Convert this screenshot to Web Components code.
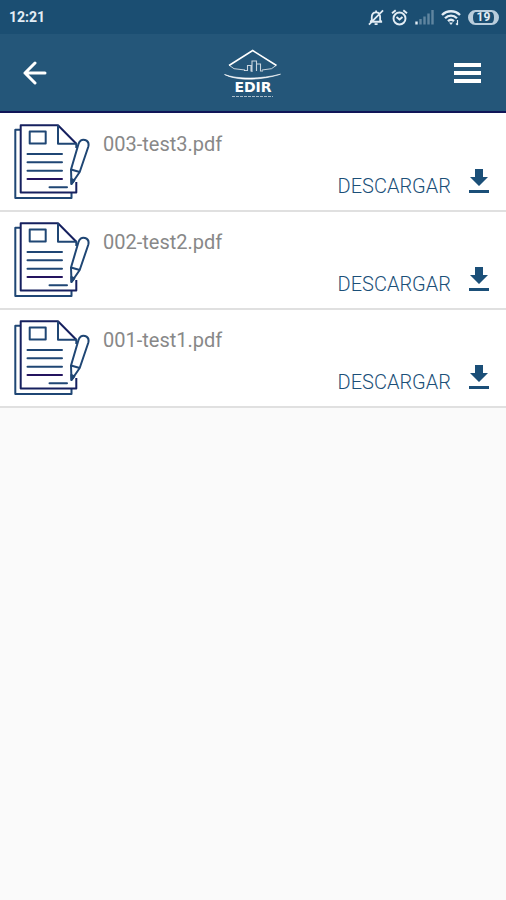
<!DOCTYPE html>
<html lang="es">
<head>
<meta charset="UTF-8">
<meta name="viewport" content="width=device-width, initial-scale=1">
<title>Documentos</title>
<style>
  body {
    margin: 0;
    background: #fafafa;
    font-family: Roboto, "Liberation Sans", sans-serif;
    --azul: #1b4f78;
    --barra: #245679;
    --estado: #1b4e72;
    --marino: #101658;
  }
</style>
</head>
<body>
<barra-estado hora="12:21" bateria="19"></barra-estado>
<barra-app></barra-app>
<lista-documentos></lista-documentos>

<script>
// Documentos disponibles para descargar
const documentos = ['003-test3.pdf', '002-test2.pdf', '001-test1.pdf'];

// Barra de estado del teléfono
class BarraEstado extends HTMLElement {
  constructor() {
    super();
    this.attachShadow({ mode: 'open' });
  }

  connectedCallback() {
    this.shadowRoot.innerHTML = `
      <style>
        :host { display: flex; align-items: center; justify-content: space-between; height: 34px; padding: 0 7px 0 9px; background: var(--estado); color: #e3edf5; }
        time { font-size: 14px; font-weight: 700; }
        .iconos { display: flex; align-items: center; gap: 7px; }
        svg { display: block; fill: none; stroke: currentColor; }
        .bateria { box-sizing: border-box; display: flex; align-items: center; justify-content: center; width: 31px; height: 15px; border: 2px solid #b9cddc; border-left-width: 5px; border-right-width: 5px; border-radius: 8px; font-size: 12px; line-height: 12px; font-weight: 700; }
      </style>
      <time>${this.getAttribute('hora')}</time>
      <div class="iconos">
        <svg width="16" height="17" viewBox="0 0 17 17" stroke-width="1.900" aria-hidden="true">
          <path d="M2 13h13M4 11.500V8c0-3 1.800-5 4.600-5s4.300 2 4.300 5v3.500l1.500 1.500M4 11.500L2.500 13M8.600 3V1M1 16L16 1"/>
          <path d="M7 15.500h3.200"/>
        </svg>
        <svg width="17" height="17" viewBox="0 0 17 17" stroke-width="1.900" aria-hidden="true">
          <circle cx="8.500" cy="9.500" r="6"/>
          <path d="M1 4.300L4.700 1.200M16 4.300L12.300 1.200M5.500 8L8.500 10.500L11.500 8"/>
        </svg>
        <svg width="19" height="16" viewBox="0 0 19 16" stroke-width="2.400" aria-hidden="true">
          <path d="M1.500 15.500v-3"/>
          <path opacity=".35" d="M5.500 15.500V10M9.500 15.500V7.500M13.500 15.500V4.500M17.500 15.500V1"/>
        </svg>
        <svg width="20" height="17" viewBox="0 0 20 17" stroke-width="2.300" aria-hidden="true">
          <path d="M1 6c5-5 13-5 18 0M4 9.200c3.500-3.500 8.500-3.500 12 0M7 12.200c1.800-1.700 4.200-1.700 6 0"/>
          <path fill="currentColor" stroke="none" d="M8 13.500h4l-2 2.500z"/>
          <path stroke-width="1.200" d="M16.500 11v5M15 14.500l1.500 1.500"/>
        </svg>
        <div class="bateria">${this.getAttribute('bateria')}</div>
      </div>
    `;
  }
}
customElements.define('barra-estado', BarraEstado);

// Logotipo: tejado, edificios y nombre
class LogoEdir extends HTMLElement {
  constructor() {
    super();
    this.attachShadow({ mode: 'open' });
    this.shadowRoot.innerHTML = `
      <style>
        :host { display: block; color: #fff; }
        svg { display: block; }
      </style>
      <svg width="60" height="50" viewBox="0 0 60 50" role="img" aria-label="EDIR" fill="none" stroke="currentColor">
        <path stroke-width="1.500" d="M6 17.500L29.700 2.500L53.500 17.500"/>
        <path stroke-width="1" opacity=".75" d="M6.500 17.500L11 20.700L22 22M53 17.500L48.500 20.700L39 22"/>
        <path stroke-width="1.100" opacity=".75" d="M21 22.500h3.500v-5h3.500v6M29 24V13h4.500v10M33.500 16h4v7h2.500"/>
        <path fill="currentColor" stroke-width=".6" d="M1.500 26.500c13 5 37 4.500 56-.3c-18 6-43 7.300-56 .3z"/>
        <text x="30" y="44" text-anchor="middle" fill="currentColor" stroke="none" font-family="DejaVu Sans, sans-serif" font-size="14" font-weight="700">EDIR</text>
        <path stroke-width="1" opacity=".6" stroke-dasharray="3 1" d="M9 48.500h41"/>
      </svg>
    `;
  }
}
customElements.define('logo-edir', LogoEdir);

// Cabecera con botón de volver, logotipo y menú
class BarraApp extends HTMLElement {
  constructor() {
    super();
    this.attachShadow({ mode: 'open' });
    this.shadowRoot.innerHTML = `
      <style>
        :host { box-sizing: border-box; display: flex; align-items: center; justify-content: space-between; height: 79px; padding: 0 15px 0 8px; background: var(--barra); border-bottom: 2px solid var(--marino); color: #fff; }
        button { display: flex; align-items: center; justify-content: center; width: 48px; height: 48px; padding: 0; border: 0; background: none; color: inherit; cursor: pointer; }
        .volver { width: 54px; }
      </style>
      <button class="volver" type="button" aria-label="Volver">
        <svg width="24" height="24" viewBox="0 0 24 24" fill="none" stroke="currentColor" stroke-width="3" stroke-linecap="round" stroke-linejoin="round"><path d="M12 2L2 12L12 22M2 12H22"/></svg>
      </button>
      <logo-edir></logo-edir>
      <button type="button" aria-label="Menú">
        <svg width="28" height="20" viewBox="0 0 28 20" fill="currentColor"><path d="M1 0h27v4H1zM1 8h27v4H1zM1 16h27v4H1z"/></svg>
      </button>
    `;
  }
}
customElements.define('barra-app', BarraApp);

// Fila de un documento con su botón de descarga
class DocumentoItem extends HTMLElement {
  constructor() {
    super();
    this.attachShadow({ mode: 'open' });
    this.shadowRoot.innerHTML = `
      <style>
        :host { box-sizing: border-box; display: flex; gap: 13px; height: 98px; padding: 10px 15px 6px 14px; background: #fff; border-bottom: 2px solid #e0e0e0; }
        .icono { flex: none; }
        .datos { flex: 1; display: flex; flex-direction: column; justify-content: space-between; padding-top: 8px; }
        .nombre { color: #888; font-size: 20px; line-height: 24px; font-weight: 400; }
        button { align-self: flex-end; display: flex; align-items: center; gap: 16px; padding: 0; border: 0; background: none; color: var(--azul); font: 300 20px/32px Roboto, "Liberation Sans", sans-serif; cursor: pointer; }
        button svg { margin-bottom: 10px; }
      </style>
      <svg class="icono" width="76" height="76" viewBox="0 0 76 76" fill="none" stroke="#1f4674" stroke-width="2" stroke-linejoin="round" aria-hidden="true">
        <path d="M6.500 5.700H1.300V74H57.500V69"/>
        <path stroke="#16205f" d="M62.300 58V68.500H6.700V1.300H44L62.300 19.700"/>
        <path d="M44 1.300V19.700H62.300V24"/>
        <path d="M15.700 7.500h16v12h-16z"/>
        <path stroke-linecap="round" d="M13.500 30H48M13.500 38.300H48M13.500 46.700H48M35.500 63.300H53"/>
        <path stroke="#24145f" stroke-linecap="round" d="M13.500 55H48"/>
        <path fill="#fff" d="M57 45.500L64.500 20c1-3.500 3.500-5 6.500-4s4.200 3.500 3.200 7L65.700 48L57.500 60z"/>
        <path d="M57 45.500L65.700 48"/>
        <path fill="#1f4674" d="M57.300 55l3 1.300l-2.800 3.700z"/>
      </svg>
      <div class="datos">
        <div class="nombre"><slot></slot></div>
        <button type="button">DESCARGAR
          <svg width="24" height="26" viewBox="0 0 24 26" fill="currentColor" aria-hidden="true"><path d="M8 1h8v8h5L12 18L3 9h5zM2 22h20v3H2z"/></svg>
        </button>
      </div>
    `;
  }
}
customElements.define('documento-item', DocumentoItem);

// Lista de documentos
class ListaDocumentos extends HTMLElement {
  constructor() {
    super();
    this.attachShadow({ mode: 'open' });
  }

  connectedCallback() {
    this.render();
  }

  render = () => {
    this.shadowRoot.innerHTML = `
      <style>
        :host { display: block; padding-top: 1px; background: #fff; }
      </style>
      ${documentos.map(nombre => `<documento-item>${nombre}</documento-item>`).join('')}
    `;
  };
}
customElements.define('lista-documentos', ListaDocumentos);
</script>
</body>
</html>
